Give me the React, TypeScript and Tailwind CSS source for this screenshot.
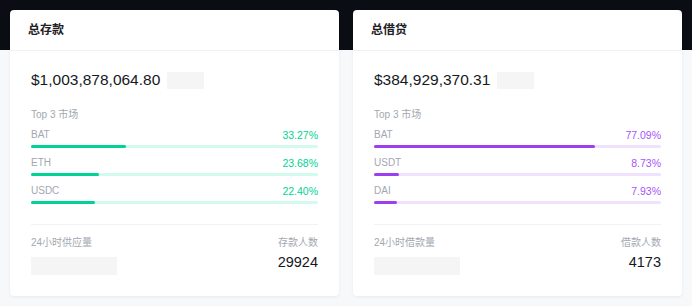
import React from "react";

type Market = { name: string; pct: number; label: string };

const supply: Market[] = [
  { name: "BAT", pct: 33.27, label: "33.27%" },
  { name: "ETH", pct: 23.68, label: "23.68%" },
  { name: "USDC", pct: 22.4, label: "22.40%" },
];

const borrow: Market[] = [
  { name: "BAT", pct: 77.09, label: "77.09%" },
  { name: "USDT", pct: 8.73, label: "8.73%" },
  { name: "DAI", pct: 7.93, label: "7.93%" },
];

function Card({
  title,
  amount,
  markets,
  variant,
  leftLabel,
  rightLabel,
  count,
}: {
  title: string;
  amount: string;
  markets: Market[];
  variant: "green" | "purple";
  leftLabel: string;
  rightLabel: string;
  count: string;
}) {
  const green = variant === "green";
  return (
    <div className="bg-white rounded-[4px] shadow-[0_1px_3px_rgba(0,0,0,0.06)] flex flex-col">
      <div className="h-[41px] px-[18px] flex items-center border-b border-[#f0f1f3]">
        <span className="text-[12px] font-semibold text-[#1d2026] leading-none">{title}</span>
      </div>
      <div className="px-[21px] pt-[20px] pb-[21px] flex flex-col">
        <div className="h-[18px] flex items-center gap-[7px]">
          <span className="text-[15.5px] text-[#16181d] leading-none">{amount}</span>
          <span className="w-[37px] h-[17px] bg-[#f5f5f6]" />
        </div>
        <div className="mt-[20px] h-[12px] flex items-center text-[10px] text-[#a3a8b0] leading-none">
          Top 3 市场
        </div>
        <div className="mt-[8px] flex flex-col gap-[9px]">
          {markets.map((m) => (
            <div key={m.name} className="flex flex-col">
              <div className="h-[12px] flex items-center justify-between leading-none">
                <span className="text-[10px] text-[#a3a8b0]">{m.name}</span>
                <span className={green ? "text-[10.5px] text-[#00d395]" : "text-[10.5px] text-[#a855f7]"}>
                  {m.label}
                </span>
              </div>
              <div className={green ? "mt-[4px] h-[3px] bg-[#d3faee] rounded-full" : "mt-[4px] h-[3px] bg-[#f0e2fd] rounded-full"}>
                <div
                  className={green ? "h-full bg-[#00d395] rounded-full" : "h-full bg-[#9b3ff0] rounded-full"}
                  style={{ width: `${m.pct}%` }}
                />
              </div>
            </div>
          ))}
        </div>
        <div className="mt-[20px] border-t border-[#f1f2f4]" />
        <div className="mt-[12px] flex justify-between">
          <div className="flex flex-col">
            <div className="h-[12px] flex items-center text-[10px] text-[#a3a8b0] leading-none">{leftLabel}</div>
            <div className="mt-[8px] w-[86px] h-[18px] bg-[#f5f5f6]" />
          </div>
          <div className="flex flex-col items-end">
            <div className="h-[12px] flex items-center text-[10px] text-[#a3a8b0] leading-none">{rightLabel}</div>
            <div className="mt-[4px] h-[18px] flex items-center text-[14.5px] text-[#16181d] leading-none">{count}</div>
          </div>
        </div>
      </div>
    </div>
  );
}

export default function App() {
  return (
    <div className="w-[692px] h-[306px] bg-[linear-gradient(to_bottom,#0a0e14_50px,#f7f8fa_50px)] font-['Liberation_Sans','Noto_Sans_CJK_SC',sans-serif] pt-[10px] pl-[10px] pr-[10px]">
      <div className="grid grid-cols-2 gap-[14px]">
        <Card
          title="总存款"
          amount="$1,003,878,064.80"
          markets={supply}
          variant="green"
          leftLabel="24小时供应量"
          rightLabel="存款人数"
          count="29924"
        />
        <Card
          title="总借贷"
          amount="$384,929,370.31"
          markets={borrow}
          variant="purple"
          leftLabel="24小时借款量"
          rightLabel="借款人数"
          count="4173"
        />
      </div>
    </div>
  );
}
